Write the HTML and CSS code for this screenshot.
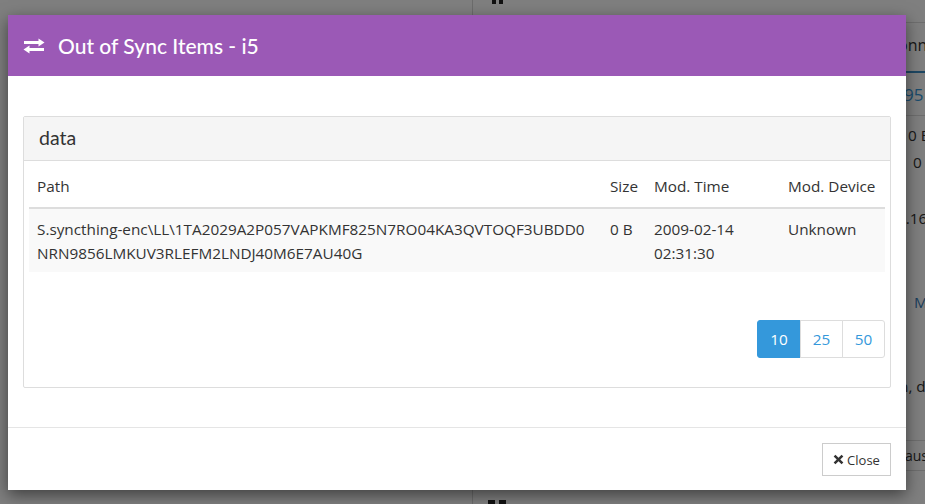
FILE: index.html
```html
<!DOCTYPE html>
<html lang="en">
<head>
<meta charset="utf-8">
<title>Out of Sync Items</title>
<link rel="stylesheet" href="styles.css">
</head>
<body>
<div class="page">
  <div class="page-rule"></div>
  <div class="pause pause-top"><i></i><i></i></div>
  <div class="pause pause-bottom"><i></i><i></i></div>
  <div class="side">
    <div class="side-rule r1"></div>
    <div class="side-rule r2"></div>
    <div class="side-rule r3"></div>
    <div class="side-rule r4"></div>
    <div class="side-line side-conn">onn</div>
    <div class="side-bar"></div>
    <div class="side-line side-num">95</div>
    <div class="side-line side-b">0 B</div>
    <div class="side-line side-zero">0</div>
    <div class="side-line side-ver">2.16</div>
    <div class="side-line side-m">M</div>
    <div class="side-line side-d">n, d</div>
    <div class="side-line side-aus">aus</div>
  </div>
</div>
<div class="backdrop"></div>
<div class="modal">
  <header class="modal-header">
    <svg class="sync-icon" width="22" height="16" viewBox="0 0 22 16" aria-hidden="true">
      <path d="M15.5 0.5 L21.5 4.5 L15.5 8.5 V6 H1 V3 H15.5 Z M6.5 7.5 V10 H21 V13 H6.5 V15.5 L0.5 11.5 Z" fill="#fff"/>
    </svg>
    <h4 class="modal-title">Out of Sync Items - i5</h4>
  </header>
  <div class="modal-body">
    <section class="panel">
      <div class="panel-heading">data</div>
      <div class="panel-content">
        <table class="items">
          <thead>
            <tr>
              <th class="col-path">Path</th>
              <th class="col-size">Size</th>
              <th class="col-time">Mod. Time</th>
              <th class="col-device">Mod. Device</th>
            </tr>
          </thead>
          <tbody>
            <tr>
              <td>S.syncthing-enc\LL\1TA2029A2P057VAPKMF825N7RO04KA3QVTOQF3UBDD0<br>NRN9856LMKUV3RLEFM2LNDJ40M6E7AU40G</td>
              <td>0 B</td>
              <td>2009-02-14<br>02:31:30</td>
              <td>Unknown</td>
            </tr>
          </tbody>
        </table>
        <div class="pager">
          <a class="page-btn active">10</a><a class="page-btn">25</a><a class="page-btn">50</a>
        </div>
      </div>
    </section>
  </div>
  <footer class="modal-footer">
    <button class="close-btn" type="button">
      <svg class="x-icon" width="11" height="11" viewBox="0 0 10 10" aria-hidden="true">
        <path d="M2.2 0.6 L5 3.4 L7.8 0.6 L9.4 2.2 L6.6 5 L9.4 7.8 L7.8 9.4 L5 6.6 L2.2 9.4 L0.6 7.8 L3.4 5 L0.6 2.2 Z" fill="#333"/>
      </svg>
      Close
    </button>
  </footer>
</div>
</body>
</html>
```
FILE: styles.css
```css
* { box-sizing: border-box; }
html, body { margin: 0; padding: 0; height: 100%; overflow: hidden; }
body {
  font-family: "Open Sans", "Liberation Sans", sans-serif;
  font-size: 15.3px;
  line-height: 24px;
  color: #333;
  background: #fff;
}
.page { position: fixed; inset: 0; background: #fff; overflow: hidden; }
.page-rule { position: absolute; left: 472px; top: 0; width: 1px; height: 504px; background: #d9d9d9; }
.pause { position: absolute; display: flex; }
.pause-top { left: 492px; top: -10px; gap: 3px; }
.pause-top i { display: block; width: 4px; height: 14px; background: #222; }
.pause-bottom { left: 488px; top: 500px; gap: 4px; }
.pause-bottom i { display: block; width: 7px; height: 14px; background: #222; }
.side-rule { position: absolute; left: 906px; width: 19px; height: 1px; background: #ddd; }
.r1 { top: 22px; }
.r2 { top: 115px; }
.r3 { top: 440px; }
.r4 { top: 470px; }
.side-line { position: absolute; white-space: nowrap; color: #333; }
.side-conn { left: 898px; top: 33px; font-size: 16px; }
.side-bar { position: absolute; left: 906px; top: 71px; width: 19px; height: 2px; background: #3a8fc7; }
.side-num { left: 904px; top: 83px; font-size: 17px; color: #3498db; }
.side-b { left: 908px; top: 123px; }
.side-zero { left: 913px; top: 150px; }
.side-ver { left: 897px; top: 206px; }
.side-m { left: 914px; top: 290px; color: #337ab7; }
.side-d { left: 899px; top: 374px; }
.side-aus { left: 905px; top: 444px; font-size: 14px; }
.backdrop { position: fixed; inset: 0; background: #000; opacity: 0.5; }
.modal {
  position: fixed;
  left: 8px;
  top: 15px;
  width: 898px;
  height: 475px;
  background: #fff;
  display: flex;
  flex-direction: column;
  box-shadow: 0 5px 15px rgba(0, 0, 0, 0.5);
}
.modal-header {
  height: 61px;
  flex: none;
  background: #9b59b6;
  color: #fff;
  display: flex;
  align-items: center;
  padding: 0 15px;
  gap: 13px;
}
.sync-icon { flex: none; }
.modal-title {
  margin: 0;
  font-family: "Lato", "Open Sans", sans-serif;
  font-size: 21px;
  font-weight: 500;
}
.modal-body { flex: 1; padding: 40px 15px 0; }
.panel { border: 1px solid #ddd; border-radius: 2px; height: 272px; background: #fff; }
.panel-heading {
  height: 44px;
  background: #f5f5f5;
  border-bottom: 1px solid #ddd;
  padding: 10px 15px;
  font-family: "Lato", "Open Sans", sans-serif;
  font-size: 19.5px;
  line-height: 22px;
}
.panel-content { padding: 5px; }
.items { width: 100%; border-collapse: collapse; border-spacing: 0; }
.items th, .items td { padding: 8px; text-align: left; vertical-align: top; font-weight: 400; line-height: 24px; }
.items th { border-bottom: 2px solid #ddd; padding-bottom: 9px; }
.items td { padding-bottom: 7px; }
.items tbody tr { background: #f9f9f9; }
.col-size { width: 44px; }
.col-time { width: 134px; }
.col-device { width: 105px; }
.pager { display: flex; justify-content: flex-end; margin-top: 48px; }
.page-btn {
  height: 38px;
  width: 43px;
  margin-left: -1px;
  border: 1px solid #ddd;
  background: #fff;
  color: #3498db;
  line-height: 36px;
  text-align: center;
}
.page-btn.active { width: 44px; background: #3498db; border-color: #3498db; color: #fff; border-radius: 3px 0 0 3px; }
.page-btn:last-child { border-radius: 0 3px 3px 0; }
.modal-footer {
  flex: none;
  height: 63px;
  border-top: 1px solid #e5e5e5;
  padding: 15px;
  display: flex;
  justify-content: flex-end;
}
.close-btn {
  height: 33px;
  width: 69px;
  padding: 0;
  border: 1px solid #ccc;
  background: #fff;
  color: #333;
  font-family: inherit;
  font-size: 13px;
  display: flex;
  align-items: center;
  justify-content: center;
  gap: 3px;
}
```
